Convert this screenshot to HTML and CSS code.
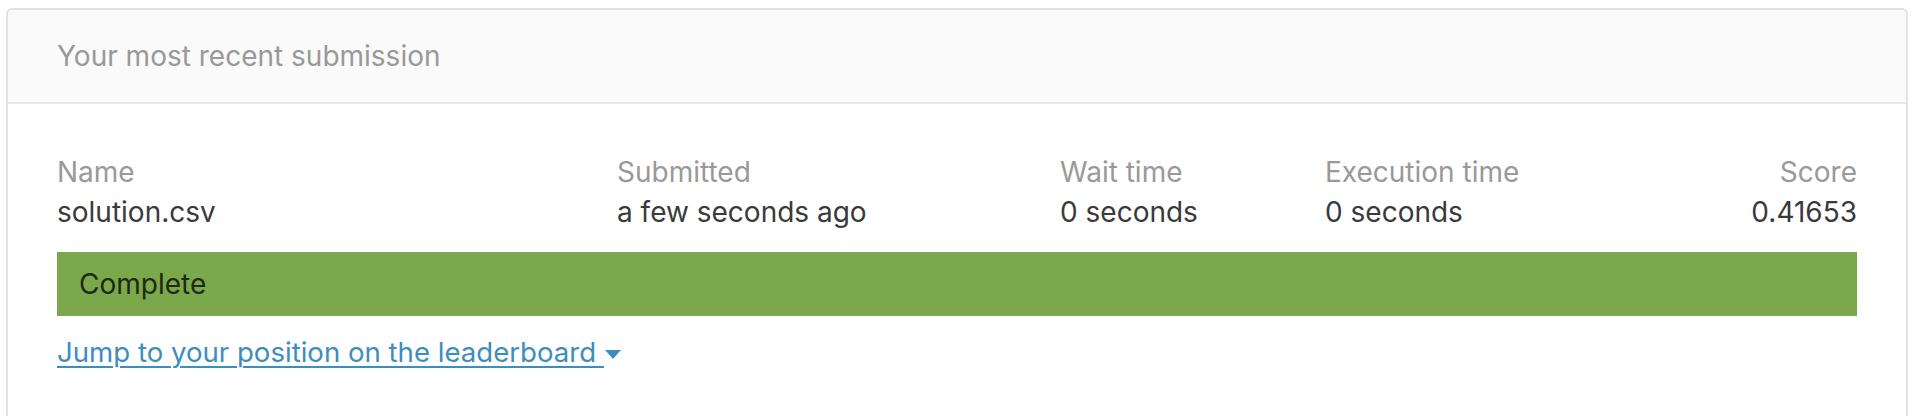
FILE: index.html
```html
<!DOCTYPE html>
<html lang="en">
<head>
<meta charset="utf-8">
<title>Your most recent submission</title>
<link rel="stylesheet" href="styles.css">
</head>
<body>
<section class="card">
  <header class="card-header">Your most recent submission</header>
  <div class="card-body">
    <div class="stats">
      <div class="stat">
        <div class="label">Name</div>
        <div class="value">solution.csv</div>
      </div>
      <div class="stat">
        <div class="label">Submitted</div>
        <div class="value">a few seconds ago</div>
      </div>
      <div class="stat">
        <div class="label">Wait time</div>
        <div class="value">0 seconds</div>
      </div>
      <div class="stat">
        <div class="label">Execution time</div>
        <div class="value">0 seconds</div>
      </div>
      <div class="stat stat-right">
        <div class="label">Score</div>
        <div class="value">0.41653</div>
      </div>
    </div>
    <div class="status">Complete</div>
    <a class="jump" href="#">Jump to your position on the leaderboard <svg class="caret" width="16" height="9" viewBox="0 0 16 9" aria-hidden="true"><path d="M0 0H16L8 9Z" fill="currentColor"/></svg></a>
  </div>
</section>
</body>
</html>
```
FILE: styles.css
```css
* { box-sizing: border-box; }
html, body { margin: 0; padding: 0; background: #ffffff; }
body {
  padding: 8px 6px 0 6px;
  font-family: Inter, "Noto Sans", sans-serif;
}
.card {
  border: 2px solid #e2e2e2;
  border-radius: 6px;
  background: #ffffff;
  height: 480px;
}
.card-header {
  height: 94px;
  background: #fafafa;
  border-bottom: 2px solid #e8e8e8;
  border-radius: 6px 6px 0 0;
  padding: 0 49px;
  display: flex;
  align-items: center;
  font-size: 28px;
  color: #999999;
}
.card-body {
  padding: 48px 49px 0 49px;
}
.stats {
  display: grid;
  grid-template-columns: 560px 443px 265px 1fr auto;
  font-size: 28px;
  line-height: 40px;
}
.stat-right { text-align: right; }
.label { color: #999999; }
.value { color: #3a3a3a; }
.status {
  margin-top: 20px;
  height: 64px;
  background: #7aa84a;
  color: #1d2a12;
  font-size: 28px;
  line-height: 40px;
  padding: 12px 22px;
}
.jump {
  display: inline-block;
  margin-top: 16px;
  font-size: 27.6px;
  line-height: 40px;
  color: #3d8dbf;
  text-decoration: underline;
  text-decoration-thickness: 2px;
  text-underline-offset: 4px;
}
.caret {
  display: inline-block;
  vertical-align: middle;
  margin-left: 1px;
}
```
